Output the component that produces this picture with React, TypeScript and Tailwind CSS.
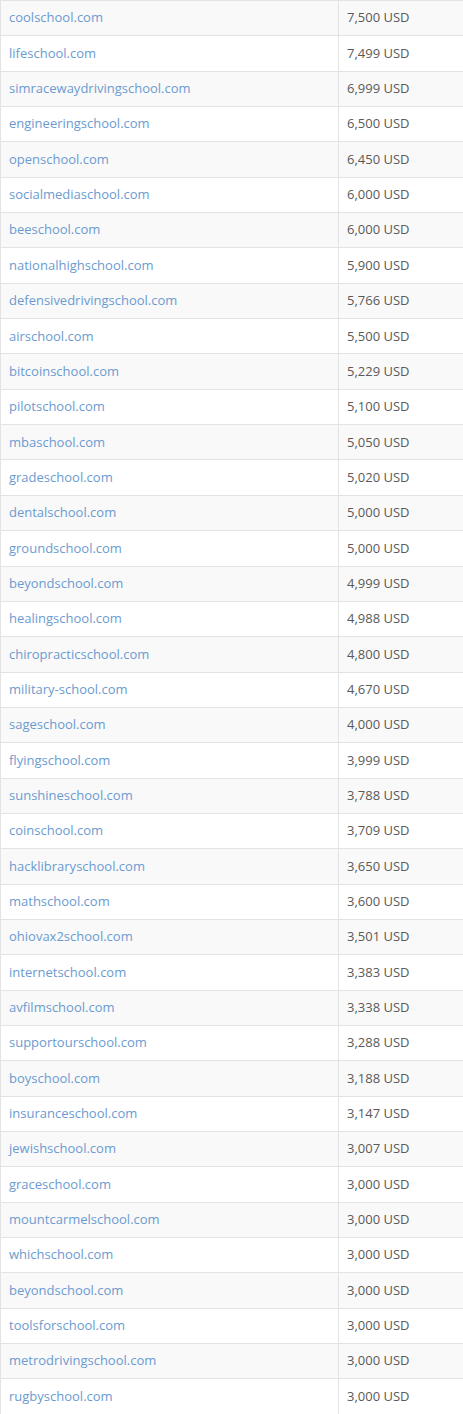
const rows: [string, string][] = [
  ["coolschool.com", "7,500"],
  ["lifeschool.com", "7,499"],
  ["simracewaydrivingschool.com", "6,999"],
  ["engineeringschool.com", "6,500"],
  ["openschool.com", "6,450"],
  ["socialmediaschool.com", "6,000"],
  ["beeschool.com", "6,000"],
  ["nationalhighschool.com", "5,900"],
  ["defensivedrivingschool.com", "5,766"],
  ["airschool.com", "5,500"],
  ["bitcoinschool.com", "5,229"],
  ["pilotschool.com", "5,100"],
  ["mbaschool.com", "5,050"],
  ["gradeschool.com", "5,020"],
  ["dentalschool.com", "5,000"],
  ["groundschool.com", "5,000"],
  ["beyondschool.com", "4,999"],
  ["healingschool.com", "4,988"],
  ["chiropracticschool.com", "4,800"],
  ["military-school.com", "4,670"],
  ["sageschool.com", "4,000"],
  ["flyingschool.com", "3,999"],
  ["sunshineschool.com", "3,788"],
  ["coinschool.com", "3,709"],
  ["hacklibraryschool.com", "3,650"],
  ["mathschool.com", "3,600"],
  ["ohiovax2school.com", "3,501"],
  ["internetschool.com", "3,383"],
  ["avfilmschool.com", "3,338"],
  ["supportourschool.com", "3,288"],
  ["boyschool.com", "3,188"],
  ["insuranceschool.com", "3,147"],
  ["jewishschool.com", "3,007"],
  ["graceschool.com", "3,000"],
  ["mountcarmelschool.com", "3,000"],
  ["whichschool.com", "3,000"],
  ["beyondschool.com", "3,000"],
  ["toolsforschool.com", "3,000"],
  ["metrodrivingschool.com", "3,000"],
  ["rugbyschool.com", "3,000"],
]

export default function App() {
  return (
    <div className="w-[463px] bg-white font-['Open_Sans',sans-serif] text-[13px]">
      <table className="w-full border-collapse border-l border-[#e3e3e3]">
        <tbody>
          {rows.map(([domain, price], i) => (
            <tr
              key={i}
              className={`h-[35.35px] border-t border-[#e3e3e3] ${i % 2 === 0 ? "bg-[#f9f9f9]" : "bg-white"}`}
            >
              <td className="w-[338px] border-r border-[#e3e3e3] px-2 align-middle">
                <a href="#" className="text-[#6b9bd0]">
                  {domain}
                </a>
              </td>
              <td className="px-2 align-middle text-[#5a5a5a]">{price} USD</td>
            </tr>
          ))}
        </tbody>
      </table>
    </div>
  )
}
